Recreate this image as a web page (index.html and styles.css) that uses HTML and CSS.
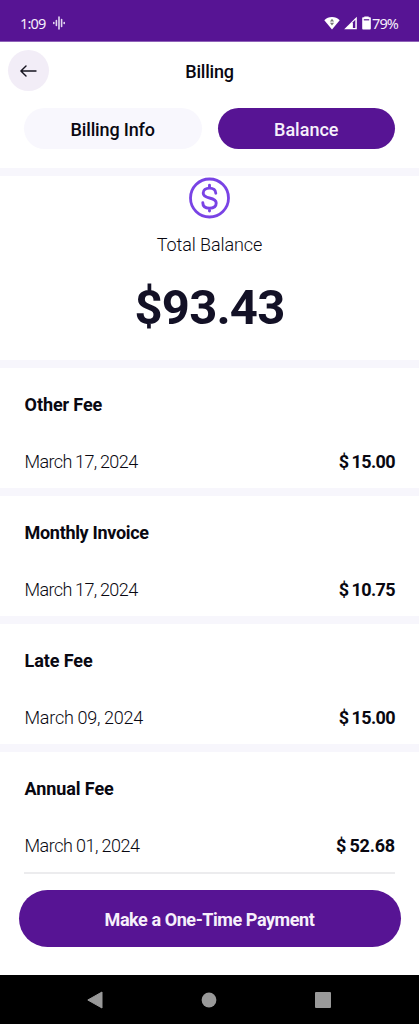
FILE: index.html
```
<!DOCTYPE html>
<html lang="en">
<head>
    <meta charset="UTF-8">
    <meta name="viewport" content="width=device-width, initial-scale=1.0">
    <title>Billing</title>
    <link rel="stylesheet" href="styles.css">
</head>
<body>

    <div class="status-bar">
        <span class="clock">1:09</span>
        <svg class="voice-icon" width="12" height="14" viewBox="0 0 12 14">
            <path d="M.8 6.500v1M3.400 4.500v5M6 1v12M8.600 3.500v7M11.200 6.500v1" stroke="#e3d8f0" stroke-width="1.600" stroke-linecap="round"/>
        </svg>
        <div class="status-right">
            <svg width="16" height="14" viewBox="0 0 16 14">
                <path d="M.3 4.200C2.500 2 5 1 8 1s5.500 1 7.700 3.200L8 13.600z" fill="#fff"/>
                <path d="M8 2.800l2.100 2.700H5.900zM8 9.500L5.900 6.800h4.200z" fill="#777"/>
            </svg>
            <svg class="signal-icon" width="13" height="14" viewBox="0 0 13 14">
                <path d="M12.800.700v12.600H.200z" fill="#fff"/>
                <path d="M8.900 6.200v5.900h2.400V3.800z" fill="#571494"/>
            </svg>
            <svg class="battery-icon" width="9" height="14" viewBox="0 0 9 14">
                <path d="M2.300 1.200V.5h4.400v.700H8q.8 0 .8.900v10.500q0 .900-.8.900H1q-.8 0-.8-.900V2.100q0-.900.8-.900z" fill="#fff"/>
                <path d="M1.800 3.800h5.400" stroke="#571494" stroke-width="1.200"/>
            </svg>
            <span class="percent">79%</span>
        </div>
    </div>

    <div class="header">
        <button class="back" aria-label="Back">
            <svg width="17" height="12" viewBox="0 0 17 12" fill="none" stroke="#15131f" stroke-width="1.400" stroke-linecap="round" stroke-linejoin="round">
                <path d="M16 6H.9M6 .9L.9 6 6 11.100"/>
            </svg>
        </button>
        <div class="title">Billing</div>
    </div>

    <div class="tabs">
        <button class="tab"><span class="info">Billing Info</span></button>
        <button class="tab active"><span>Balance</span></button>
    </div>

    <div class="total">
        <svg width="42" height="42" viewBox="0 0 42 42" fill="none" stroke="#7943e5" stroke-linecap="round">
            <circle cx="20.500" cy="21" r="19" stroke-width="2.800"/>
            <path d="M26.800 16.300c0-3.300-2.500-5.200-6.300-5.200s-6.300 1.900-6.300 5c0 3.200 2.800 4.200 6.300 4.900s6.700 1.900 6.700 5c0 3.300-2.700 5.200-6.700 5.200s-6.700-1.900-6.700-5.400M20.500 8.300v2.800M20.500 31.200V34" stroke-width="2.900"/>
        </svg>
        <div class="total-label">Total Balance</div>
        <div class="total-amount">$93.43</div>
    </div>

    <div class="item">
        <div class="name">Other Fee</div>
        <div class="row"><span class="date tight">March 17, 2024</span><span class="amount tight">$ 15.00</span></div>
    </div>
    <div class="item">
        <div class="name long">Monthly Invoice</div>
        <div class="row"><span class="date tight">March 17, 2024</span><span class="amount tight">$ 10.75</span></div>
    </div>
    <div class="item">
        <div class="name">Late Fee</div>
        <div class="row"><span class="date">March 09, 2024</span><span class="amount tight">$ 15.00</span></div>
    </div>
    <div class="item last">
        <div class="name">Annual Fee</div>
        <div class="row"><span class="date narrow">March 01, 2024</span><span class="amount">$ 52.68</span></div>
    </div>

    <button class="pay"><span>Make a One-Time Payment</span></button>

    <div class="nav-bar">
        <svg width="16" height="18" viewBox="0 0 16 18"><path d="M15 1v16L.8 9z" fill="#999" stroke="#999" stroke-linejoin="round"/></svg>
        <svg width="16" height="16" viewBox="0 0 16 16"><circle cx="8" cy="8" r="7.400" fill="#999"/></svg>
        <svg width="16" height="16" viewBox="0 0 16 16"><rect width="16" height="16" rx="1" fill="#999"/></svg>
    </div>

</body>
</html>
```
FILE: styles.css
```
* { box-sizing: border-box; }
body { margin: 0; height: 1024px; display: flex; flex-direction: column; overflow: hidden; background: white; color: #090811; font-family: Roboto, "Liberation Sans", sans-serif; font-size: 18px; }
button { border: none; padding: 0; font: inherit; color: inherit; display: flex; align-items: center; justify-content: center; cursor: pointer; }
svg { display: block; flex: none; }
.status-bar { height: 42px; flex: none; display: flex; align-items: center; padding: 4px 20px 0 20px; background: #571494; border-bottom: 1px solid #8e62b8; color: #f4eefa; font-family: "Noto Sans", sans-serif; font-size: 14.5px; }
.clock { width: 26px; letter-spacing: -0.8px; }
.voice-icon { margin-left: 7px; }
.status-right { display: flex; align-items: center; margin-left: auto; }
.signal-icon { margin-left: 4px; }
.battery-icon { margin-left: 5px; }
.percent { margin-left: 1px; width: 27px; letter-spacing: -0.9px; }
.header { height: 66px; flex: none; display: grid; grid-template-columns: 41px 1fr 41px; align-items: start; padding: 8px 8px 0; }
.back { width: 41px; height: 41px; border-radius: 50%; background: #f2edf7; }
.title { line-height: 44px; font-weight: 500; text-align: center; letter-spacing: -0.2px; }
.tabs { height: 60px; flex: none; display: grid; grid-template-columns: 1fr 1fr; gap: 16px; padding: 0 24px; }
.tab { height: 41px; padding-top: 2px; border-radius: 21px; background: #f8f7fd; font-weight: 500; }
.info { letter-spacing: -0.15px; }
.tab.active { background: #571494; color: #f6f0fb; }
.total { height: 192px; flex: none; display: flex; flex-direction: column; align-items: center; border-top: 8px solid #f7f6fc; padding-top: 1px; }
.total-label { margin-top: 14px; line-height: 24px; font-weight: 300; letter-spacing: -0.1px; }
.total-amount { margin-top: 21px; line-height: 60px; font-size: 49px; font-weight: 700; letter-spacing: -0.8px; color: #131126; }
.item { height: 128px; flex: none; border-top: 8px solid #f7f6fc; padding: 24px 24px 0; }
.name { line-height: 26px; font-weight: 700; letter-spacing: -0.1px; text-indent: 0.6px; }
.long { letter-spacing: -0.32px; }
.row { display: flex; justify-content: space-between; margin-top: 31px; line-height: 26px; }
.date { padding-left: 0.5px; font-weight: 300; letter-spacing: -0.2px; word-spacing: -0.5px; }
.date.tight { letter-spacing: -0.6px; }
.date.narrow { letter-spacing: -0.45px; }
.amount { font-weight: 700; letter-spacing: -0.2px; word-spacing: -1px; }
.amount.tight { letter-spacing: -0.6px; }
.last { height: 129px; padding: 24px 0 0; }
.last .name { margin: 0 24px; }
.last .row { margin: 31px 24px 0; padding-bottom: 13px; border-bottom: 2px solid #ececee; }
.pay { width: 382px; height: 57px; margin: 17px auto 0; flex: none; padding-top: 2px; border-radius: 29px; background: #571494; color: #f6f0fb; font-weight: 700; letter-spacing: -0.43px; }
.nav-bar { height: 49px; flex: none; display: flex; align-items: center; justify-content: space-between; margin-top: auto; padding: 0 88px 0 87px; background: black; }
```
